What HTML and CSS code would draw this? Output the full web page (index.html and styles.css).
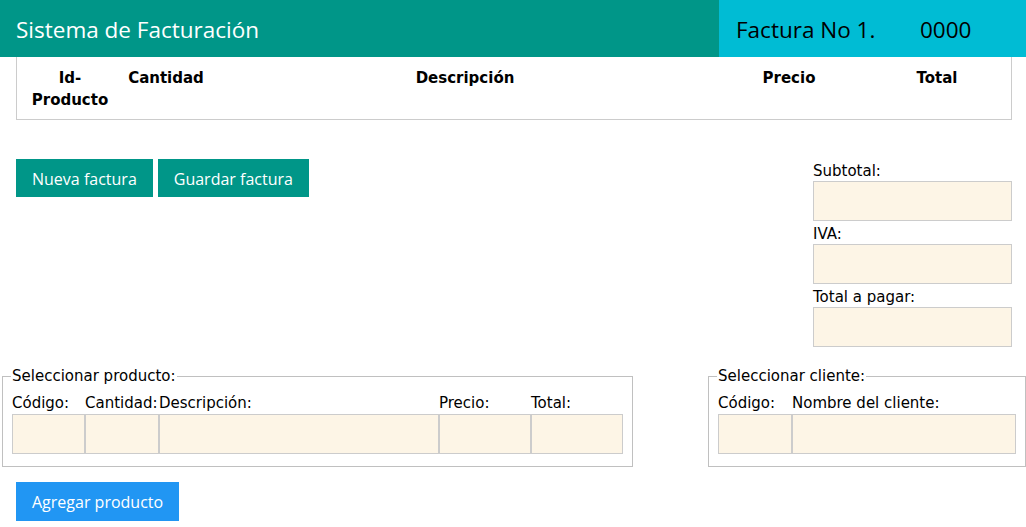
FILE: index.html
```html
<!DOCTYPE html>
<html lang="es">
<head>
<meta charset="utf-8">
<title>Sistema de Facturación</title>
<link rel="stylesheet" href="styles.css">
</head>
<body>
<header class="topbar">
  <div class="brand">Sistema de Facturación</div>
  <div class="invoice-no"><span class="inv-label">Factura No 1.</span><span class="inv-num">0000</span></div>
</header>

<section class="items">
  <table class="items-table">
    <thead>
      <tr>
        <th class="c-id">Id-<br>Producto</th>
        <th class="c-qty">Cantidad</th>
        <th class="c-desc">Descripción</th>
        <th class="c-price">Precio</th>
        <th class="c-total">Total</th>
      </tr>
    </thead>
  </table>
</section>

<section class="middle">
  <div class="actions">
    <button class="btn btn-teal">Nueva factura</button>
    <button class="btn btn-teal">Guardar factura</button>
  </div>
  <div class="totals">
    <label class="t-label">Subtotal:</label>
    <input class="field t-field" type="text">
    <label class="t-label">IVA:</label>
    <input class="field t-field" type="text">
    <label class="t-label">Total a pagar:</label>
    <input class="field t-field" type="text">
  </div>
</section>

<section class="selectors">
  <fieldset class="group group-product">
    <legend>Seleccionar producto:</legend>
    <div class="cols">
      <div class="col w-code"><label>Código:</label><input class="field" type="text"></div>
      <div class="col w-qty"><label>Cantidad:</label><input class="field" type="text"></div>
      <div class="col w-desc"><label>Descripción:</label><input class="field" type="text"></div>
      <div class="col w-price"><label>Precio:</label><input class="field" type="text"></div>
      <div class="col w-total"><label>Total:</label><input class="field" type="text"></div>
    </div>
  </fieldset>
  <fieldset class="group group-client">
    <legend>Seleccionar cliente:</legend>
    <div class="cols">
      <div class="col w-ccode"><label>Código:</label><input class="field" type="text"></div>
      <div class="col w-cname"><label>Nombre del cliente:</label><input class="field" type="text"></div>
    </div>
  </fieldset>
</section>

<div class="bottom">
  <button class="btn btn-blue">Agregar producto</button>
</div>
</body>
</html>
```

FILE: styles.css
```css
* { box-sizing: border-box; }
html, body { margin: 0; padding: 0; background: #fff; }
body {
  font-family: "DejaVu Sans", Verdana, sans-serif;
  font-size: 15px;
  color: #000;
  width: 1026px;
}

.topbar {
  display: flex;
  height: 57px;
}
.brand {
  flex: 0 0 719px;
  background: #009688;
  color: #fff;
  font-family: "Open Sans", "Noto Sans", sans-serif;
  font-size: 22.5px;
  line-height: 57px;
  padding: 1px 0 0 16px;
}
.invoice-no {
  flex: 1;
  background: #00BCD4;
  color: #000;
  font-family: "Open Sans", "Noto Sans", sans-serif;
  font-size: 22.5px;
  line-height: 57px;
  padding: 1px 0 0 17px;
  display: flex;
}
.inv-label { width: 184px; }

.items {
  margin: 0 14px 0 16px;
  border: 1px solid #ccc;
  border-top: none;
}
.items-table {
  width: 100%;
  border-collapse: collapse;
  table-layout: fixed;
}
.items-table th {
  font-family: "DejaVu Sans", Verdana, sans-serif;
  font-weight: bold;
  font-size: 15px;
  line-height: 22px;
  text-align: center;
  vertical-align: top;
  padding: 10px 0 8px;
}
.c-id { width: 106px; }
.c-qty { width: 86px; }
.c-desc { width: 512px; }
.c-price { width: 136px; }
.items-table th.c-total { width: 154px; padding-left: 6px; }

.middle {
  display: flex;
  justify-content: space-between;
  align-items: flex-start;
  margin-top: 39px;
  padding: 0 14px 0 16px;
}
.actions { display: flex; gap: 5px; }
.btn {
  border: none;
  color: #fff;
  font-family: "Open Sans", "Noto Sans", sans-serif;
  font-size: 16px;
  height: 38px;
  padding: 1px 16px 0;
  cursor: pointer;
}
.btn-teal { background: #009688; }
.btn-blue { background: #2196F3; height: 39px; }

.totals {
  width: 199px;
  display: flex;
  flex-direction: column;
  margin-top: -1px;
}
.t-label {
  display: block;
  line-height: 19px;
  margin-top: 4px;
}
.field {
  display: block;
  height: 40px;
  background: #FDF5E6;
  border: 1px solid #ccc;
  margin: 0;
  padding: 0 4px;
  font: inherit;
  width: 100%;
}

.selectors {
  display: flex;
  justify-content: space-between;
  margin-top: 20px;
}
.group {
  border: 1px solid #c0c0c0;
  margin: 0 2px;
  padding: 9px 9px 12px;
}
.group legend {
  padding: 0 1px;
  margin-left: -1px;
  line-height: 18px;
}
.group-product { width: 630px; }
.group-client { width: 318px; margin-right: 0; }
.cols { display: flex; }
.col label {
  display: block;
  line-height: 18px;
  margin-bottom: 2px;
  white-space: nowrap;
}
.w-code { width: 73px; }
.w-qty { width: 74px; }
.w-desc { width: 280px; }
.w-price { width: 92px; }
.w-total { width: 92px; }
.w-ccode { width: 74px; }
.w-cname { width: 224px; }

.bottom {
  margin-top: 15px;
  padding-left: 16px;
}
```
